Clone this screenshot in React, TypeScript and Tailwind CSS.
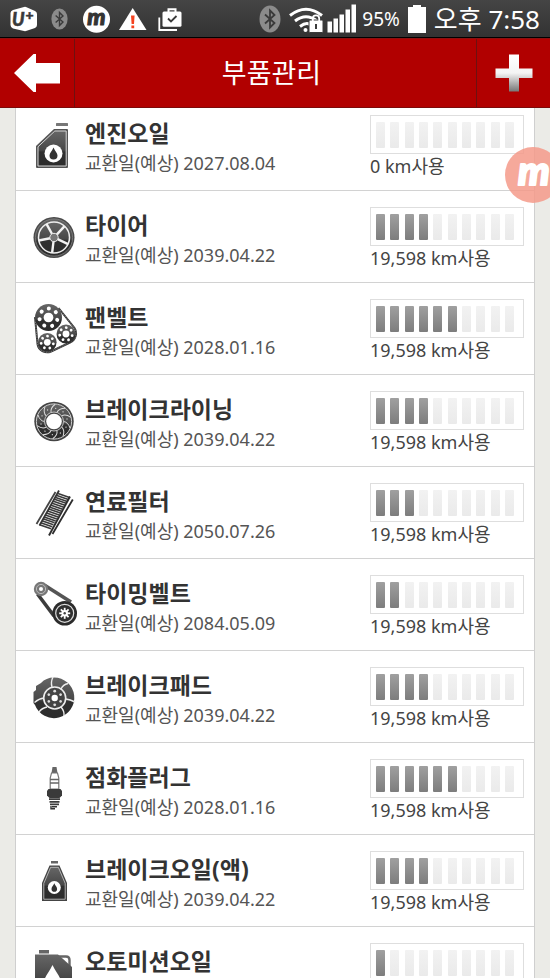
import type { ReactNode } from "react";

type Part = {
  name: string;
  date: string;
  km: string;
  level: number;
  icon: ReactNode;
};

const DROP = "M0 -6 C1.5 -2.5 4 -0.5 4 2 A4 4 0 0 1 -4 2 C-4 -0.5 -1.5 -2.5 0 -6 Z";

function ring(count: number, offset = 0) {
  return Array.from({ length: count }, (_, i) => (i * 360) / count + offset);
}

function PartIcon({ children }: { children: ReactNode }) {
  return (
    <svg viewBox="0 0 48 52" className="h-[52px] w-12 shrink-0" aria-hidden="true">
      {children}
    </svg>
  );
}

function EngineOil() {
  return (
    <PartIcon>
      <rect x="26" y="4" width="12" height="3" rx="0.5" fill="#777" />
      <path d="M24 10 H37 Q38 10 38 11 V48 Q38 49 37 49 H7 Q6 49 6 48 V27 Z" fill="#555" />
      <path d="M24.8 12 H36.2 V47 H8 V27.8 Z" fill="url(#metal)" stroke="#d5d5d5" strokeWidth="1" />
      <circle cx="23.5" cy="34.5" r="9" fill="#fff" />
      <path d={DROP} transform="translate(23.5 34.5)" fill="#333" />
    </PartIcon>
  );
}

function Tire() {
  return (
    <PartIcon>
      <circle cx="24" cy="26.5" r="20.5" fill="#4a4a4a" />
      <circle cx="24" cy="26.5" r="18.6" fill="url(#metal)" stroke="#888" strokeWidth="0.7" />
      <circle cx="24" cy="26.5" r="15.5" fill="url(#metal)" stroke="#eee" strokeWidth="1.5" />
      {ring(5, 97).map((a) => (
        <path key={a} d="M4 0 L15.5 0" transform={`translate(24 26.5) rotate(${a})`} stroke="#f2f2f2" strokeWidth="2.4" />
      ))}
      <circle cx="24" cy="26.5" r="4.2" fill="#777" stroke="#eee" strokeWidth="1" />
    </PartIcon>
  );
}

function Pulley({ x, y, r, holes }: { x: number; y: number; r: number; holes: number }) {
  return (
    <g transform={`translate(${x} ${y})`}>
      <circle r={r} fill="url(#metal)" />
      {ring(holes, 15).map((a) => (
        <circle key={a} cx={r * 0.67} r={r * 0.15} transform={`rotate(${a})`} fill="#fff" />
      ))}
      <circle r={r * 0.36} fill="#fff" />
    </g>
  );
}

function FanBelt() {
  return (
    <PartIcon>
      <path d="M28.5 5 L44.5 25 A10 10 0 0 1 40 39.5 L21 48.5 A9.8 9.8 0 0 1 7.5 41 L5 14" fill="#fff" stroke="#333" strokeWidth="2" />
      <path d="M28.5 5 L44.5 25 A10 10 0 0 1 40 39.5 L21 48.5 A9.8 9.8 0 0 1 7.5 41 L5 14" fill="none" stroke="#999" strokeWidth="0.7" strokeDasharray="1.5 1" />
      <Pulley x={18.5} y={14.5} r={13.5} holes={7} />
      <Pulley x={36} y={31} r={9.5} holes={7} />
      <Pulley x={17.3} y={39.3} r={9.3} holes={7} />
    </PartIcon>
  );
}

function BrakeLining() {
  return (
    <PartIcon>
      <circle cx="24" cy="26.5" r="19.7" fill="#444" />
      <circle cx="24" cy="26.5" r="17.6" fill="url(#metal)" stroke="#ccc" strokeWidth="1" />
      {ring(10).map((a) => (
        <g key={a} transform={`translate(24 26.5) rotate(${a})`}>
          <path d="M9.5 0 Q14 0.5 16 6.5" stroke="#ddd" strokeWidth="1" fill="none" />
          <circle cx="13" cy="-2.5" r="0.7" fill="#ccc" />
        </g>
      ))}
      <circle cx="24" cy="26.5" r="9.5" fill="#444" stroke="#ddd" strokeWidth="0.8" />
      <circle cx="24" cy="26.5" r="7.8" fill="#fff" />
    </PartIcon>
  );
}

function FuelFilter() {
  return (
    <PartIcon>
      <g strokeWidth="1.6" stroke="#3a3a3a">
        {Array.from({ length: 17 }, (_, i) => (
          <path key={i} d={`M${28 - i * 1.15} ${6.5 + i * 1.95} l11.5 4`} />
        ))}
      </g>
      <path d="M29 3.5 L9.5 38.5" stroke="#333" strokeWidth="1.8" />
      <path d="M25.5 5 L6.5 37" stroke="#444" strokeWidth="1.8" />
      <path d="M40 9.5 L19 48.5" stroke="#2d2d2d" strokeWidth="1.9" />
      <path d="M42.8 12.5 L22.5 47" stroke="#2d2d2d" strokeWidth="1.8" />
    </PartIcon>
  );
}

function TimingBelt() {
  return (
    <PartIcon>
      <path d="M15 6.5 L41 23" stroke="#555" strokeWidth="3.6" />
      <path d="M7.5 15 L24 37" stroke="#3c3c3c" strokeWidth="3.6" />
      <circle cx="11" cy="10" r="7.2" fill="#777" />
      <circle cx="11" cy="10" r="4.6" fill="none" stroke="#bbb" strokeWidth="1" />
      <circle cx="11" cy="10" r="2" fill="#fff" />
      <circle cx="34.7" cy="34.3" r="12.3" fill="#2b2b2b" />
      <circle cx="34.7" cy="34.3" r="9" fill="#2f2f2f" stroke="#ddd" strokeWidth="1.2" />
      {ring(8).map((a) => (
        <rect key={a} x="1" y="-0.9" width="4.5" height="1.8" transform={`translate(34.7 34.3) rotate(${a})`} fill="#fff" />
      ))}
      <circle cx="34.7" cy="34.3" r="3.2" fill="#fff" />
      <circle cx="34.7" cy="34.3" r="1.2" fill="#444" />
    </PartIcon>
  );
}

function BrakePad() {
  return (
    <PartIcon>
      <path d="M24 6.5 A20.3 20.3 0 1 1 5 34 L3.5 32 L3.5 21 L6 19 L6 15 L11 12 Q16 6.5 24 6.5 Z" fill="url(#metal)" />
      <g stroke="#eee" strokeWidth="1.4" fill="none">
        <path d="M22 16 Q20.5 11 23 6" />
        <path d="M31 18 Q33 13.5 38 12.5" />
        <path d="M36 28 Q40 28.5 45 31" />
        <path d="M31 36 Q34.5 40 34 45" />
        <path d="M17 36 Q12 37 9 41" />
        <path d="M14 27 Q9 27.5 4.5 31.5" />
      </g>
      <circle cx="24.7" cy="27" r="11" fill="#444" stroke="#eee" strokeWidth="1.6" />
      {ring(6, 30).map((a) => (
        <circle key={a} cx="6.8" r="1.4" transform={`translate(24.7 27) rotate(${a})`} fill="#ddd" />
      ))}
      <circle cx="24.7" cy="27" r="3.2" fill="#fff" />
    </PartIcon>
  );
}

function SparkPlug() {
  return (
    <PartIcon>
      <path d="M22.5 4 H26.5 L27.5 10 H21.5 Z" fill="#666" />
      <path d="M21.5 10 H27.5 L28.8 15 V26 H20.2 V15 Z" fill="#fff" stroke="#777" strokeWidth="1.2" />
      <path d="M20 16.5 H29 M20 20 H29" stroke="#666" strokeWidth="1.6" />
      <path d="M18.5 26 H30.5 L32 28 V32.5 L29.5 35 H19.5 L17 32.5 V28 Z" fill="#3a3a3a" />
      <path d="M19 36.2 H30 M19.5 38.8 H29.5 M20 41.3 H29" stroke="#3c3c3c" strokeWidth="1.8" />
      <path d="M22 43 H27 V44.5 H22 Z" fill="#333" />
      <path d="M21 43 V45.8 H25" fill="none" stroke="#333" strokeWidth="1.4" />
    </PartIcon>
  );
}

function BrakeOil() {
  return (
    <PartIcon>
      <rect x="21" y="6" width="7" height="2.5" fill="#666" />
      <path d="M19.5 10.5 H29.5 L37 28 V46 H12 V28 Z" fill="#444" />
      <path d="M20.6 12.3 H28.4 L35.2 28.4 V44.2 H13.8 V28.4 Z" fill="url(#metal)" stroke="#ccc" strokeWidth="0.8" />
      <circle cx="24.3" cy="32.5" r="6.5" fill="#fff" />
      <path d={DROP} transform="translate(24.3 32.5) scale(0.7)" fill="#333" />
    </PartIcon>
  );
}

function MissionOil() {
  return (
    <PartIcon>
      <rect x="9" y="3" width="10" height="3.5" fill="#666" />
      <path d="M28 9.5 H36 Q39.5 9.5 39.5 13 V20" fill="none" stroke="#666" strokeWidth="2.4" />
      <path d="M5 7.5 H28 L42 20 V49 H5 Z" fill="url(#metal)" />
      <path d={DROP} transform="translate(22.5 30) scale(2)" fill="#fff" />
    </PartIcon>
  );
}

const parts: Part[] = [
  { name: "엔진오일", date: "2027.08.04", km: "0", level: 0, icon: <EngineOil /> },
  { name: "타이어", date: "2039.04.22", km: "19,598", level: 4, icon: <Tire /> },
  { name: "팬벨트", date: "2028.01.16", km: "19,598", level: 6, icon: <FanBelt /> },
  { name: "브레이크라이닝", date: "2039.04.22", km: "19,598", level: 4, icon: <BrakeLining /> },
  { name: "연료필터", date: "2050.07.26", km: "19,598", level: 3, icon: <FuelFilter /> },
  { name: "타이밍벨트", date: "2084.05.09", km: "19,598", level: 2, icon: <TimingBelt /> },
  { name: "브레이크패드", date: "2039.04.22", km: "19,598", level: 4, icon: <BrakePad /> },
  { name: "점화플러그", date: "2028.01.16", km: "19,598", level: 6, icon: <SparkPlug /> },
  { name: "브레이크오일(액)", date: "2039.04.22", km: "19,598", level: 4, icon: <BrakeOil /> },
  { name: "오토미션오일", date: "2039.04.22", km: "19,598", level: 1, icon: <MissionOil /> },
];

function Bluetooth({ className }: { className: string }) {
  return (
    <svg viewBox="0 0 22 28" className={className} aria-hidden="true">
      <ellipse cx="11" cy="14" rx="10.5" ry="13.5" fill="#8b8b8b" />
      <path d="M6 9.5 L15.5 18 L11 22.5 V5.5 L15.5 10 L6 18.5" fill="none" stroke="#3a3a3a" strokeWidth="1.8" />
    </svg>
  );
}

function StatusBar() {
  return (
    <div className="flex h-[38px] shrink-0 items-center justify-between border-b border-black bg-linear-to-b from-[#454545] to-[#323232] px-[10px] text-white">
      <div className="flex items-center gap-1">
        <svg viewBox="0 0 30 30" className="size-[30px]" aria-hidden="true">
          <path d="M3 6 L14 3 Q15 2.7 16 3 L25 7 Q27 8 27 10 V21 Q27 23 25 24 L16 27 Q15 27.3 14 27 L3 24.5 Q0.5 23.5 0.5 21 V9 Q0.5 7 3 6 Z" fill="#fff" />
          <text x="2" y="22" fontSize="18" fontWeight="900" fontStyle="italic" fill="#3a3a3a" stroke="#3a3a3a" strokeWidth="0.5" className="font-[family-name:Lato]">U</text>
          <text x="15.5" y="15.5" fontSize="14" fontWeight="900" fill="#3a3a3a" stroke="#3a3a3a" strokeWidth="0.5" className="font-[family-name:Lato]">+</text>
        </svg>
        <span className="flex w-[31px] justify-center">
          <Bluetooth className="h-[22px] w-[17px]" />
        </span>
        <svg viewBox="0 0 35 28" className="h-7 w-[35px] overflow-visible" aria-hidden="true">
          <circle cx="17.5" cy="14.3" r="13.5" fill="#fff" />
          <text x="17.5" y="20" textAnchor="middle" fontSize="23" fontWeight="900" fontStyle="italic" fill="#333" stroke="#333" strokeWidth="1" strokeLinejoin="round" className="font-[family-name:Lato]">m</text>
        </svg>
        <svg viewBox="0 0 30 28" className="h-7 w-[30px]" aria-hidden="true">
          <path d="M14.7 3 L28.5 25 H1 Z" fill="#fff" />
          <path d="M13 10.5 H16.6 L16 19 H13.6 Z M13.4 20.5 H16.2 V23.2 H13.4 Z" fill="#f4421f" />
        </svg>
        <svg viewBox="0 0 36 28" className="h-7 w-9" aria-hidden="true">
          <path d="M7.3 12.5 V25 H25" fill="none" stroke="#fff" strokeWidth="1.8" />
          <path d="M16.5 7 V4.2 H23.5 V7" fill="none" stroke="#fff" strokeWidth="2" />
          <rect x="10.5" y="6.5" width="19" height="15.2" rx="1.5" fill="#fff" />
          <path d="M16 13.5 L19 16.5 L24.5 11" fill="none" stroke="#3a3a3a" strokeWidth="1.8" />
        </svg>
      </div>
      <div className="flex items-center gap-2">
        <Bluetooth className="h-7 w-[22px]" />
        <svg viewBox="0 0 69 30" className="h-[30px] w-[69px]" aria-hidden="true">
          <g fill="none" stroke="#fff" strokeWidth="3">
            <path d="M1 11.5 Q17 -1 33 11.5" />
            <path d="M6 17 Q17 8.5 28 17" />
            <path d="M11 22.5 Q17 18 21 20.5" />
          </g>
          <circle cx="16.5" cy="26" r="2" fill="#fff" />
          <rect x="20" y="16" width="14" height="12.5" rx="1" fill="#fff" stroke="#3b3b3b" />
          <path d="M23.8 17 V14.5 A3.2 3.2 0 0 1 30.2 14.5 V17" fill="none" stroke="#fff" strokeWidth="1.8" />
          <path d="M27 20 V25" stroke="#3b3b3b" strokeWidth="2" />
          <path d="M38.5 17.5 h4.5 v11 h-4.5 z M44.5 14.5 h4.5 v14 h-4.5 z M50.5 10.5 h4.5 v18 h-4.5 z M56.5 5.5 h4.5 v23 h-4.5 z M62.5 0.5 h4.5 v28 h-4.5 z" fill="#fff" />
        </svg>
        <span className="-ml-1 text-[19px]/6">95%</span>
        <svg viewBox="0 0 18 28" className="h-7 w-[18px]" aria-hidden="true">
          <path d="M5 0 H13 V2 H18 V28 H0 V2 H5 Z" fill="#fff" />
        </svg>
        <span className="text-[26px]/9">오후 7:58</span>
      </div>
    </div>
  );
}

function Header() {
  return (
    <header className="flex h-[70px] shrink-0 border-t border-b border-t-[#8c1010] border-b-[#7c0a0a] bg-[#b10000] text-white">
      <button type="button" aria-label="뒤로" className="flex w-[75px] items-center justify-center border-r border-[#6d1111]">
        <svg viewBox="0 0 46 38" className="h-[38px] w-[46px]" aria-hidden="true">
          <path d="M0 19 L19.5 0 H22 V9 H46 V29.5 H22 V38 H19.5 Z" fill="#fff" />
        </svg>
      </button>
      <h1 className="flex flex-1 items-center justify-center pr-2 text-[27px]/10">부품관리</h1>
      <button type="button" aria-label="추가" className="flex w-[74px] items-center justify-center border-l border-[#6d1111]">
        <svg viewBox="0 0 38 38" className="size-[38px]" aria-hidden="true">
          <path d="M14 0.5 H24 V14.5 H37.5 V24 H24 V37.5 H14 V24 H0.5 V14.5 H14 Z" fill="url(#plus)" />
        </svg>
      </button>
    </header>
  );
}

function Gauge({ level }: { level: number }) {
  return (
    <div className="flex h-[39px] items-center justify-between border border-[#dedede] bg-white pr-[9px] pl-[5px]">
      {Array.from({ length: 10 }, (_, i) => (
        <span
          key={i}
          className={
            i < level
              ? "h-[26px] w-[9px] rounded-[1px] bg-linear-to-b from-[#a0a0a0] to-[#7d7d7d]"
              : "h-[26px] w-[9px] rounded-[1px] bg-linear-to-b from-[#f2f2f2] to-[#eaeaea]"
          }
        />
      ))}
    </div>
  );
}

export default function App() {
  return (
    <div className="relative flex h-screen flex-col overflow-hidden bg-[#ebebe7] font-['Noto_Sans','Noto_Sans_CJK_KR',sans-serif]">
      <svg className="absolute size-0" aria-hidden="true">
        <defs>
          <linearGradient id="metal" x1="0" y1="0" x2="0" y2="1">
            <stop offset="0" stopColor="#666" />
            <stop offset="0.55" stopColor="#484848" />
            <stop offset="0.6" stopColor="#303030" />
            <stop offset="1" stopColor="#2c2c2c" />
          </linearGradient>
          <linearGradient id="plus" x1="0" y1="0" x2="0" y2="1">
            <stop offset="0" stopColor="#fff" />
            <stop offset="0.5" stopColor="#f4f4f4" />
            <stop offset="1" stopColor="#777" />
          </linearGradient>
        </defs>
      </svg>

      <StatusBar />
      <Header />

      <main className="flex-1 overflow-y-auto px-[15px] [scrollbar-width:none]">
        <ul className="-mt-[9px] border-x border-[#cfcfcf] bg-white">
          {parts.map((part) => (
            <li key={part.name} className="flex h-[92px] items-start border-b border-[#d2d2d2] pr-[10px] pl-[14px]">
              <div className="pt-5">{part.icon}</div>
              <div className="flex-1 pt-5 pl-[7px]">
                <h2 className="text-[23px]/7 font-bold text-[#333]">{part.name}</h2>
                <p className="text-[18px]/8 text-[#555]">교환일(예상) {part.date}</p>
              </div>
              <div className="w-[154px] pt-4">
                <Gauge level={part.level} />
                <p className="text-[18px]/6 text-[#444]">{part.km} km사용</p>
              </div>
            </li>
          ))}
        </ul>
      </main>

      <div className="absolute top-[147px] -right-[11px] flex size-14 items-center justify-center rounded-full bg-[#f59a8a]/85">
        <svg viewBox="0 0 56 56" className="size-14" aria-hidden="true">
          <text x="29" y="38" textAnchor="middle" fontSize="40" fontWeight="900" fontStyle="italic" fill="#fff" stroke="#fff" strokeWidth="2" strokeLinejoin="round" className="font-[family-name:Lato]">m</text>
        </svg>
      </div>
    </div>
  );
}
